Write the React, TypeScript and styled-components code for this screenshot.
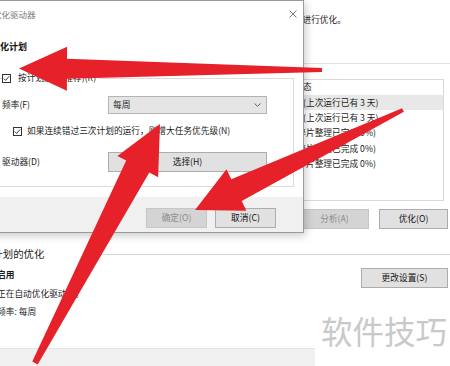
import React from "react";
import styled, { createGlobalStyle } from "styled-components";

const GlobalStyle = createGlobalStyle`
  html, body { margin: 0; padding: 0; }
  body {
    width: 450px; height: 366px; overflow: hidden; background: #fff;
    font-family: "Noto Sans CJK SC", "Noto Sans", sans-serif; color: #1b1b1b;
  }
  #root { width: 450px; height: 366px; }
`;

const Page = styled.div`
  position: relative;
  width: 450px;
  height: 366px;
  overflow: hidden;
  background: #fff;
  font-size: 8.7px;
  line-height: 12px;
`;

/* ---------- background window ---------- */
const MainWindow = styled.div`
  display: flex;
  flex-direction: column;
  margin-left: -17px;
  width: 467px;
  height: 366px;
  box-sizing: border-box;
  padding-top: 14px;
`;

const Description = styled.p`
  margin: 0 0 0 -2px;
  height: 12px;
  white-space: nowrap;
`;

const Divider = styled.div`
  height: 1px;
  background: #e2e2e2;
  margin-top: 37px;
`;

const ListBox = styled.div`
  margin: 15px 6px 0 0;
  height: 122px;
  box-sizing: border-box;
  border: 1px solid #d9d9d9;
  background: #fff;
`;

const ListRow = styled.div<{ $head?: boolean; $selected?: boolean }>`
  display: grid;
  grid-template-columns: 113px 80px 100px 1fr;
  height: ${(p) => (p.$head ? "14.5px" : "15.4px")};
  line-height: ${(p) => (p.$head ? "14.5px" : "15.4px")};
  background: ${(p) => (p.$selected ? "#e8e8e8" : "transparent")};
  white-space: nowrap;
  overflow: hidden;
`;

const Cell = styled.span<{ $pad?: boolean }>`
  overflow: hidden;
  padding-left: ${(p) => (p.$pad ? "4px" : "0")};
`;

const ButtonRow = styled.div`
  display: flex;
  justify-content: flex-end;
  gap: 10px;
  margin-top: 8px;
  padding-right: 2px;
`;

const WinButton = styled.button<{ $w: number; $off?: boolean }>`
  width: ${(p) => p.$w}px;
  height: 20px;
  padding: 0;
  box-sizing: border-box;
  font-family: inherit;
  font-size: 8.7px;
  line-height: 18px;
  color: ${(p) => (p.$off ? "#8c8c8c" : "#111")};
  background: ${(p) => (p.$off ? "#d4d4d4" : "#e1e1e1")};
  border: 1px solid ${(p) => (p.$off ? "#c6c6c6" : "#adadad")};
  border-radius: 0;
`;

const SectionHead = styled.div`
  display: flex;
  align-items: center;
  margin-top: 19px;
  margin-left: -1px;
  font-size: 10.4px;
  line-height: 12px;
`;

const SectionRule = styled.div`
  flex: 1;
  height: 1px;
  background: #d6d6d6;
  margin-left: 49px;
`;

const ScheduleBody = styled.div`
  display: flex;
  justify-content: space-between;
  align-items: flex-start;
  margin-top: 6px;
  padding: 0 2px 0 14px;
`;

const ScheduleText = styled.div`
  line-height: 18.5px;
`;

const Strong = styled.div`
  font-weight: 700;
`;

const ChangeButton = styled(WinButton)`
  margin-top: 2px;
`;

const Footer = styled.div`
  margin-top: auto;
  height: 18px;
  box-sizing: border-box;
  background: #f0f0f0;
  border-top: 1px solid #e6e6e6;
`;

/* ---------- dialog ---------- */
const Dialog = styled.div`
  position: absolute;
  top: 0;
  left: -20px;
  width: 324px;
  box-sizing: border-box;
  border: 1px solid #9a9a9a;
  background: #fff;
  box-shadow: 2px 3px 8px rgba(0, 0, 0, 0.2);
  display: flex;
  flex-direction: column;
`;

const TitleBar = styled.div`
  display: flex;
  align-items: center;
  height: 26px;
  padding-left: 12px;
  color: #7a7a7a;
  font-size: 8.5px;
`;

const CloseIcon = styled.svg`
  margin-left: auto;
  margin-right: 6px;
`;

const Body = styled.div`
  padding: 0 9px 10px 10px;
`;

const Heading = styled.div`
  margin-top: 13px;
  font-weight: 700;
  font-size: 9px;
  line-height: 13px;
  color: #111;
`;

const Group = styled.fieldset`
  margin: 19px 0 0 0;
  padding: 12px 26px 14px 10px;
  border: 1px solid #dcdcdc;
  min-width: 0;
`;

const Legend = styled.legend`
  display: flex;
  align-items: center;
  gap: 7px;
  padding: 0 3px 0 0;
  height: 12px;
`;

const Box = styled.span`
  display: inline-flex;
  width: 9px;
  height: 9px;
  box-sizing: border-box;
  border: 1px solid #333;
  background: #fff;
`;

const FormRow = styled.div<{ $h: number; $top?: number }>`
  display: grid;
  grid-template-columns: 106px 159px;
  align-items: center;
  height: ${(p) => p.$h}px;
  margin-top: ${(p) => p.$top ?? 0}px;
`;

const Select = styled.div`
  display: flex;
  align-items: center;
  justify-content: space-between;
  height: 18px;
  box-sizing: border-box;
  padding: 0 5px 0 4px;
  background: #e5e5e5;
  border: 1px solid #b4b4b4;
`;

const CheckRow = styled.div`
  display: flex;
  align-items: center;
  gap: 5px;
  height: 14px;
  margin-top: 10px;
  padding-left: 11px;
  white-space: nowrap;
`;

const DialogFooter = styled.div`
  display: flex;
  justify-content: flex-end;
  gap: 8px;
  height: 35px;
  box-sizing: border-box;
  padding: 11px 27px 0 0;
  background: #f0f0f0;
`;

/* ---------- overlays ---------- */
const Overlay = styled.svg`
  position: absolute;
  left: 0;
  top: 0;
  pointer-events: none;
`;

const Watermark = styled.div`
  position: absolute;
  right: 0;
  bottom: 0;
  width: 135px;
  height: 66px;
  box-sizing: border-box;
  padding: 12px 3px 0 0;
  background: #fff;
  display: flex;
  justify-content: flex-end;
  align-items: flex-start;
  font-size: 31.5px;
  line-height: 36px;
  color: #c9c9c9;
  white-space: nowrap;
`;

type Pt = [number, number];

function arrowPoints(tail: Pt, tip: Pt, headLen: number, headHalf: number, neckHalf: number, tailHalf: number) {
  const dx = tip[0] - tail[0];
  const dy = tip[1] - tail[1];
  const len = Math.hypot(dx, dy);
  const ux = dx / len;
  const uy = dy / len;
  const nx = -uy;
  const ny = ux;
  const bx = tip[0] - ux * headLen;
  const by = tip[1] - uy * headLen;
  const pts: Pt[] = [
    [tail[0] + nx * tailHalf, tail[1] + ny * tailHalf],
    [bx + nx * neckHalf, by + ny * neckHalf],
    [bx + nx * headHalf, by + ny * headHalf],
    tip,
    [bx - nx * headHalf, by - ny * headHalf],
    [bx - nx * neckHalf, by - ny * neckHalf],
    [tail[0] - nx * tailHalf, tail[1] - ny * tailHalf],
  ];
  return pts.map((p) => p.map((v) => v.toFixed(1)).join(",")).join(" ");
}

const arrows = [
  { tail: [322, 70] as Pt, tip: [19, 68.5] as Pt, hl: 48, hh: 22, nh: 10, th: 2 },
  { tail: [35, 363] as Pt, tip: [160, 124] as Pt, hl: 48, hh: 23, nh: 13, th: 3 },
  { tail: [403, 110] as Pt, tip: [195, 210] as Pt, hl: 46, hh: 23, nh: 12, th: 2 },
];

const drives = [
  { name: "(C:)", media: "固态硬盘", time: "2023/5/5 9:10", status: "需优化(上次运行已有 3 天)", sel: true },
  { name: "(D:)", media: "固态硬盘", time: "2023/5/5 9:10", status: "需优化(上次运行已有 3 天)", sel: false },
  { name: "(E:)", media: "硬盘驱动器", time: "2023/5/8 10:21", status: "正常(碎片整理已完成 0%)", sel: false },
  { name: "(F:)", media: "硬盘驱动器", time: "2023/5/8 10:21", status: "正常(碎片整理已完成 0%)", sel: false },
  { name: "(G:)", media: "硬盘驱动器", time: "2023/5/8 10:21", status: "正常(碎片整理已完成 0%)", sel: false },
];

const Check = () => (
  <Box>
    <svg width="7" height="7" viewBox="0 0 7 7">
      <path d="M0.8 3.6 L2.6 5.4 L6.2 1.3" fill="none" stroke="#222" strokeWidth="0.9" />
    </svg>
  </Box>
);

export default function App() {
  return (
    <Page>
      <GlobalStyle />
      <MainWindow>
        <Description>你可以优化驱动器以帮助计算机更高效地运行，或者分析驱动器以了解是否需要对其进行优化。</Description>
        <Divider />
        <ListBox>
          <ListRow $head>
            <Cell $pad>驱动器</Cell>
            <Cell $pad>媒体类型</Cell>
            <Cell $pad>上次运行时间</Cell>
            <Cell>当前状态</Cell>
          </ListRow>
          {drives.map((d) => (
            <ListRow key={d.name} $selected={d.sel}>
              <Cell $pad>{d.name}</Cell>
              <Cell $pad>{d.media}</Cell>
              <Cell $pad>{d.time}</Cell>
              <Cell>{d.status}</Cell>
            </ListRow>
          ))}
        </ListBox>
        <ButtonRow>
          <WinButton $w={69} $off>分析(A)</WinButton>
          <WinButton $w={69}>优化(O)</WinButton>
        </ButtonRow>
        <SectionHead>
          已计划的优化
          <SectionRule />
        </SectionHead>
        <ScheduleBody>
          <ScheduleText>
            <Strong>启用</Strong>
            <div>正在自动优化驱动器。</div>
            <div>频率: 每周</div>
          </ScheduleText>
          <ChangeButton $w={87}>更改设置(S)</ChangeButton>
        </ScheduleBody>
        <Footer />
      </MainWindow>

      <Dialog>
        <TitleBar>
          优化驱动器
          <CloseIcon width="8" height="8" viewBox="0 0 8 8">
            <path d="M0.5 0.5 L7.5 7.5 M7.5 0.5 L0.5 7.5" stroke="#6a6a6a" strokeWidth="0.9" />
          </CloseIcon>
        </TitleBar>
        <Body>
          <Heading>优化计划</Heading>
          <Group>
            <Legend>
              <Check />
              按计划运行(推荐)(R)
            </Legend>
            <FormRow $h={18}>
              <span>频率(F)</span>
              <Select>
                每周
                <svg width="7" height="4" viewBox="0 0 7 4">
                  <path d="M0.5 0.5 L3.5 3.3 L6.5 0.5" fill="none" stroke="#555" strokeWidth="0.9" />
                </svg>
              </Select>
            </FormRow>
            <CheckRow>
              <Check />
              如果连续错过三次计划的运行，则增大任务优先级(N)
            </CheckRow>
            <FormRow $h={20} $top={14}>
              <span>驱动器(D)</span>
              <WinButton $w={159}>选择(H)</WinButton>
            </FormRow>
          </Group>
        </Body>
        <DialogFooter>
          <WinButton $w={61} $off>确定(O)</WinButton>
          <WinButton $w={61}>取消(C)</WinButton>
        </DialogFooter>
      </Dialog>

      <Watermark>软件技巧</Watermark>

      <Overlay width="450" height="366" viewBox="0 0 450 366">
        {arrows.map((a, i) => (
          <polygon key={i} points={arrowPoints(a.tail, a.tip, a.hl, a.hh, a.nh, a.th)} fill="#e62129" />
        ))}
      </Overlay>
    </Page>
  );
}
